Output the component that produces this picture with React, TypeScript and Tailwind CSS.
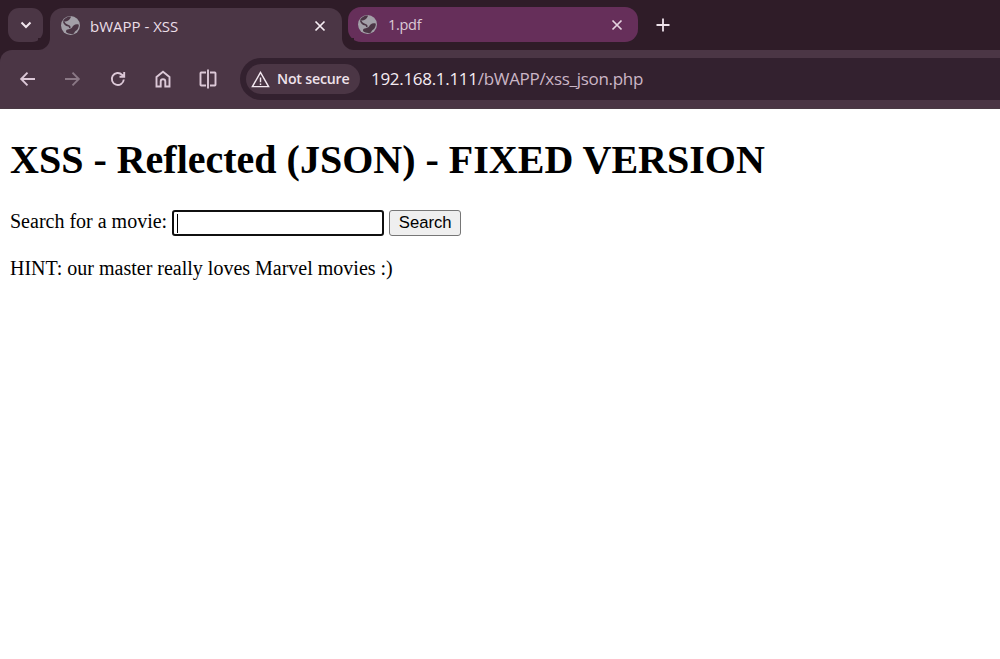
import React from "react";

const Globe = () => (
  <svg width="19" height="19" viewBox="0 0 18 18" className="shrink-0">
    <circle cx="9" cy="9" r="9" fill="#a3a0a8" />
    <path d="M2 4.500C4 5.500 6 5.200 7.200 4 8.300 3 9.300 2 9.500.5 6.500.2 3.600 1.800 2 4.500Z" fill="#4b3645" />
    <path d="M16.900 8.200c-1.800-.6-3.700-.3-5 .7-1.200 1-1.300 2.200-2.600 3-1.300.8-2.900.6-3.800 1.200-.7.5-.9 1.400-.6 2.400 2.200 1.700 5 2.100 7.600 1 .1-1.400 1-2 2.100-2.800 1.400-1.200 2.300-3.400 2.300-5.500Z" fill="#4b3645" />
    <path d="M2.500 5c.5 2.500 2.500 3.800 4.500 4.300 1.200.3 1.600 1.200 1.100 2.100" fill="none" stroke="#4b3645" strokeWidth="1.500" />
  </svg>
);

const Close = ({ color }: { color: string }) => (
  <svg width="12" height="12" viewBox="0 0 12 12" fill="none" stroke={color} strokeWidth="1.700" className="shrink-0">
    <path d="M1.500 1.500l9 9M10.500 1.500l-9 9" />
  </svg>
);

const NavIcon = ({ children, cls }: { children: React.ReactNode; cls: string }) => (
  <div className={"w-[45px] h-[22px] flex items-center justify-center shrink-0 " + cls}>
    <svg width="20" height="20" viewBox="0 0 20 20" fill="none" stroke="currentColor" strokeWidth="1.900">
      {children}
    </svg>
  </div>
);

export default function App() {
  return (
    <div className="w-[1000px] h-[659px] bg-white overflow-hidden font-['Liberation_Serif',serif] text-black">
      <div className="h-[50px] bg-[#2f1c28] flex pl-2 font-['Open_Sans',sans-serif]">
        <div className="w-[35px] h-[34px] mt-2 rounded-[11px] bg-[#4b3645] flex items-center justify-center">
          <svg width="12" height="8" viewBox="0 0 12 8" fill="none" stroke="#f2e6ee" strokeWidth="2">
            <path d="M1.500 1.500L6 6l4.500-4.500" />
          </svg>
        </div>
        <div className="relative ml-[7px] mt-2 w-[292px] h-[42px] bg-[#4b3645] rounded-t-[13px] flex items-start pl-[11px] pr-[16px] pt-[8px] gap-[10px]">
          <span className="absolute -left-3 bottom-0 w-3 h-3 bg-[#4b3645]">
            <span className="block w-3 h-3 bg-[#2f1c28] rounded-br-[12px]" />
          </span>
          <span className="absolute -right-3 bottom-0 w-3 h-3 bg-[#4b3645]">
            <span className="block w-3 h-3 bg-[#2f1c28] rounded-bl-[12px]" />
          </span>
          <Globe />
          <span className="flex-1 text-[15px] leading-[20px] text-[#ecdfe8]">bWAPP - XSS</span>
          <span className="h-[19px] flex items-center"><Close color="#f6edf3" /></span>
        </div>
        <div className="ml-[6px] mt-[7px] w-[290px] h-[35px] bg-[#662f5a] rounded-[13px] flex items-center pl-[10px] pr-[15px] gap-[11px]">
          <Globe />
          <span className="flex-1 text-[14.500px] leading-[20px] text-[#dbc9d6] tracking-[-0.3px]">1.pdf</span>
          <Close color="#e4d3df" />
        </div>
        <div className="ml-[18px] mt-[18px] w-[14px] h-[14px] relative">
          <svg width="14" height="14" viewBox="0 0 14 14" fill="none" stroke="#eee2ea" strokeWidth="1.800">
            <path d="M7 .500v13M.500 7h13" />
          </svg>
        </div>
      </div>

      <div className="bg-[#2f1c28]">
        <div className="h-[59px] bg-[#4b3645] rounded-tl-[12px] flex items-start pt-2 pl-[5px] border-b border-b-[#4a3a44]">
          <div className="flex h-[42px] items-center">
            <NavIcon cls="text-[#dcc8d7]"><path d="M17 10H3.500M9.500 3.700L3.200 10l6.300 6.300" /></NavIcon>
            <NavIcon cls="text-[#8a7885] -translate-x-px"><path d="M3 10h13.500M10.500 3.700l6.300 6.300-6.300 6.300" /></NavIcon>
            <NavIcon cls="text-[#dcc8d7]"><path d="M15.800 10.500a6 6 0 1 1-1.700-4.700l1.900 1.800M16.200 3v4.700h-4.700" /></NavIcon>
            <NavIcon cls="text-[#dcc8d7]"><path d="M3.500 17.500V8L10 2.800 16.500 8v9.500h-4.200v-5a2.300 2.300 0 0 0-4.600 0v5Z" /></NavIcon>
            <NavIcon cls="text-[#dcc8d7]"><path d="M8 3.500H3.200a.8.8 0 0 0-.7.800v11.400c0 .4.300.8.700.8H8M12 3.500h4.800c.4 0 .7.400.7.800v11.400c0 .4-.3.800-.7.800H12M10 .5v19" /></NavIcon>
          </div>
          <div className="ml-[10px] flex-1 h-[42px] bg-[#33212f] rounded-l-[21px] flex items-center pl-[6px] font-['Open_Sans',sans-serif]">
            <div className="h-[30px] w-[114px] rounded-[15px] bg-[#4b3645] flex items-center pl-[5px] gap-[7px] shrink-0">
              <svg width="19" height="19" viewBox="0 0 20 20" fill="none" stroke="#f4e9f1" strokeWidth="1.500" className="shrink-0">
                <path d="M10 2.500L1.500 17.500h17ZM10 8v5M10 14.200v1.600" />
              </svg>
              <span className="text-[14.200px] font-semibold text-[#efe2eb] whitespace-nowrap tracking-[-0.2px]">Not secure</span>
            </div>
            <span className="ml-[11px] text-[17px] whitespace-nowrap text-[#cbb6c6] tracking-[-0.3px]">
              <span className="text-[#f5ecf2]">192.168.1.111</span>/bWAPP/xss_json.php
            </span>
          </div>
        </div>
      </div>

      <div className="px-[10px]">
        <h1 className="text-[40px] font-bold leading-[46px] mt-[28px] mb-0">XSS - Reflected (JSON) - FIXED VERSION</h1>
        <form className="mt-[27px] flex items-center text-[20px] leading-[26px] h-[26px]">
          <label className="pb-[4px]">Search for a movie:</label>
          <div className="ml-[5px] w-[212px] h-[26px] border-2 border-[#101010] rounded-[3px] bg-white flex items-center pl-[3px]">
            <span className="block w-px h-[19px] bg-black" />
          </div>
          <button type="button" className="ml-[5px] w-[72px] h-[26px] bg-[#efefef] border border-[#767676] rounded-[3px] text-[16.670px] leading-none font-['Liberation_Sans',sans-serif] text-black">Search</button>
        </form>
        <p className="mt-[21px] text-[20px] leading-[23px]">HINT: our master really loves Marvel movies :)</p>
      </div>
    </div>
  );
}
